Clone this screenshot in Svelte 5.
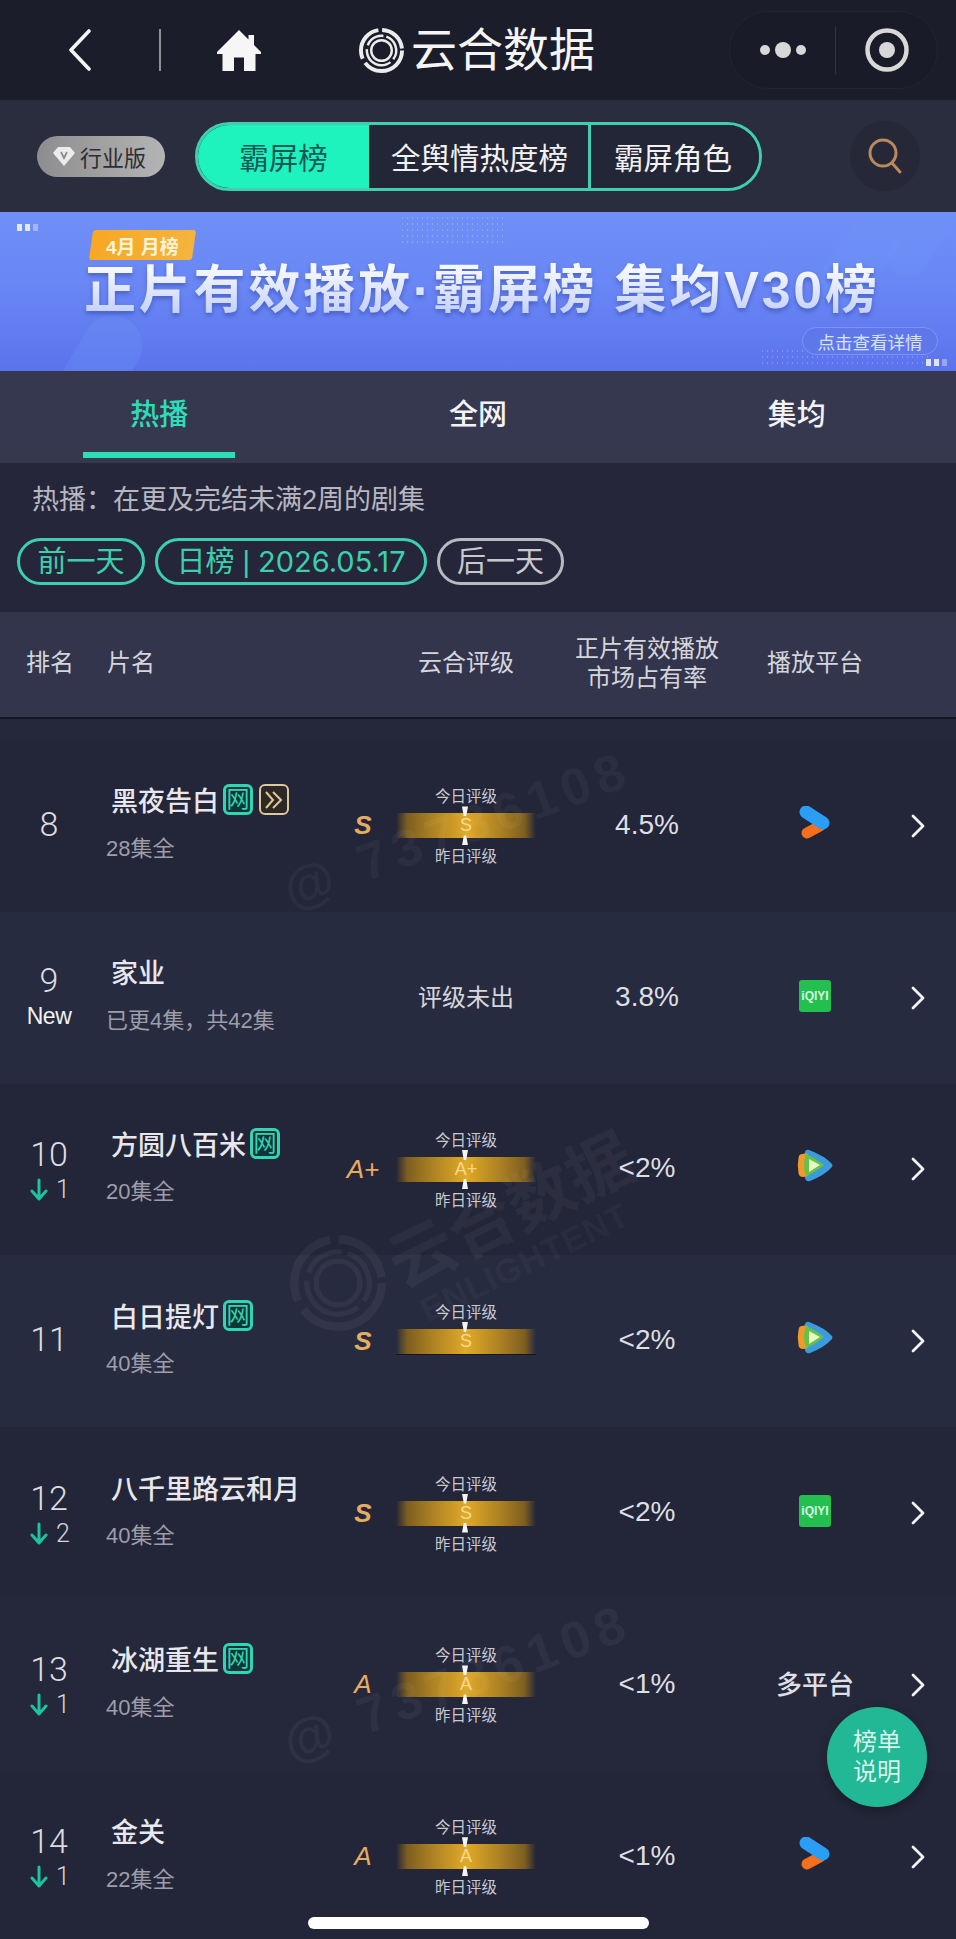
<script>
  const rows = [
    { n: '8', title: '黑夜告白', net: true, fast: true, sub: '28集全', grade: 'S', pct: '4.5%', plat: 'youku' },
    { n: '9', isNew: true, title: '家业', sub: '已更4集，共42集', pct: '3.8%', plat: 'iqiyi' },
    { n: '10', down: '1', title: '方圆八百米', net: true, sub: '20集全', grade: 'A+', pct: '<2%', plat: 'tencent' },
    { n: '11', title: '白日提灯', net: true, sub: '40集全', grade: 'S', noPrev: true, pct: '<2%', plat: 'tencent' },
    { n: '12', down: '2', title: '八千里路云和月', sub: '40集全', grade: 'S', pct: '<2%', plat: 'iqiyi' },
    { n: '13', down: '1', title: '冰湖重生', net: true, sub: '40集全', grade: 'A', pct: '<1%', plat: 'multi' },
    { n: '14', down: '1', title: '金关', sub: '22集全', grade: 'A', pct: '<1%', plat: 'youku' }
  ];
</script>

{#snippet ringLogo(size, color)}
  <svg width={size} height={size} viewBox="0 0 48 48" fill="none" stroke={color}>
    <circle cx="24" cy="24" r="21" stroke-width="4" stroke-dasharray="52 5 38 4 30 3"/>
    <circle cx="24" cy="24" r="15" stroke-width="2.5" stroke-dasharray="30 4 20 3 28 4" transform="rotate(70 24 24)"/>
    <circle cx="24" cy="24" r="10.5" stroke-width="2.5"/>
  </svg>
{/snippet}

<div class="page">
  <header class="nav">
    <svg class="back" width="24" height="42" viewBox="0 0 24 42" fill="none" stroke="#f4f4f4" stroke-width="3.6" stroke-linecap="round" stroke-linejoin="round"><path d="M21 2 L3 21 L21 40"/></svg>
    <span class="nav-div"></span>
    <svg class="home" width="44" height="41" viewBox="0 0 44 41" fill="#f6f6f6"><path d="M22 0 L31.5 9.5 V5 H37 V15 L44 22 V24 H38.5 V41 H27 V27.5 H17 V41 H5.5 V24 H0 V22 Z"/></svg>
    <div class="brand">
      {@render ringLogo(47, '#ececec')}
      <span>云合数据</span>
    </div>
    <div class="capsule">
      <div class="dots"><i></i><b></b><i></i></div>
      <span class="cap-div"></span>
      <svg width="44" height="44" viewBox="0 0 44 44" fill="none"><circle cx="22" cy="22" r="19.5" stroke="#d8d8d8" stroke-width="4.5"/><circle cx="22" cy="22" r="8" fill="#d8d8d8"/></svg>
    </div>
  </header>

  <section class="filters">
    <div class="vip">
      <svg width="22" height="22" viewBox="0 0 22 22"><path d="M5 2 H17 L22 8 L11 21 L0 8 Z" fill="#ececec"/><path d="M8 7 L11 13 L14 7" fill="none" stroke="#8b8b8b" stroke-width="1.8"/></svg>
      <span>行业版</span>
    </div>
    <div class="seg">
      <span class="seg-on">霸屏榜</span>
      <span class="seg-mid">全舆情热度榜</span>
      <span class="seg-end">霸屏角色</span>
    </div>
    <div class="search">
      <svg width="36" height="38" viewBox="0 0 36 38" fill="none" stroke="#b98a5e" stroke-width="3" stroke-linecap="round"><circle cx="16" cy="16" r="13"/><path d="M25 26 L33 35"/></svg>
    </div>
  </section>

  <section class="banner">
    <span class="blob b1"></span><span class="blob b2"></span><span class="blob b3"></span>
    <span class="grid-dots gd1"></span><span class="grid-dots gd2"></span>
    <span class="sq sq1"><i></i><i></i><i></i></span>
    <span class="sq sq2"><i></i><i></i><i></i></span>
    <div class="tag"><span>4月 月榜</span></div>
    <h1>正片有效播放·霸屏榜 集均V30榜</h1>
    <div class="more">点击查看详情</div>
  </section>

  <nav class="tabs">
    <div class="tab active">热播<i></i></div>
    <div class="tab">全网</div>
    <div class="tab">集均</div>
  </nav>

  <section class="info">
    <p>热播：在更及完结未满2周的剧集</p>
    <div class="pills">
      <span class="pill p1">前一天</span>
      <span class="pill p2">日榜 | <em>2026.05.17</em></span>
      <span class="pill p3">后一天</span>
    </div>
  </section>

  <div class="thead">
    <span class="th-rank">排名</span>
    <span class="th-name">片名</span>
    <span class="th-rate">云合评级</span>
    <span class="th-pct">正片有效播放<br>市场占有率</span>
    <span class="th-plat">播放平台</span>
  </div>

  <div class="list">
    {#each rows as r, i}
      <div class="row" class:alt={i % 2 === 1}>
        <div class="rank" class:solo={!r.down && !r.isNew} class:dropped={r.down}>
          <span class="num">{r.n}</span>
          {#if r.isNew}<span class="new">New</span>{/if}
          {#if r.down}
            <span class="delta">
              <svg width="18" height="24" viewBox="0 0 18 24" fill="none" stroke="#1cc39c" stroke-width="3" stroke-linecap="round" stroke-linejoin="round"><path d="M9 2 V21 M2 13 L9 21 L16 13"/></svg>
              {r.down}
            </span>
          {/if}
        </div>
        <div class="name">
          <div class="title">
            <span>{r.title}</span>
            {#if r.net}<span class="badge net">网</span>{/if}
            {#if r.fast}
              <span class="badge fast"><svg width="20" height="20" viewBox="0 0 20 20" fill="none" stroke="#e3c896" stroke-width="2"><path d="M2 2 L9 10 L2 18 M9 2 L17 10 L9 18"/></svg></span>
            {/if}
          </div>
          <div class="sub">{r.sub}</div>
        </div>
        {#if r.grade}
          <div class="letter" class:bold={r.grade === 'S'}>{r.grade}</div>
          <div class="rating">
            <span class="lab">今日评级</span>
            <div class="bar" class:nobot={r.noPrev}>
              <i class="tri up"></i>
              <span>{r.grade}</span>
              {#if !r.noPrev}<i class="tri dn"></i>{/if}
            </div>
            <span class="lab" class:hide={r.noPrev}>昨日评级</span>
          </div>
        {:else}
          <div class="unrated">评级未出</div>
        {/if}
        <div class="pct">{r.pct}</div>
        <div class="plat">
          {#if r.plat === 'youku'}
            <svg width="32" height="36" viewBox="0 0 32 36" fill="none" stroke-linecap="round" stroke-linejoin="round">
              <path d="M8 27 L21 20" stroke="#f4701c" stroke-width="11"/>
              <path d="M7 6 L24 17" stroke="#2a9df4" stroke-width="13"/>
            </svg>
          {:else if r.plat === 'iqiyi'}
            <span class="iq">iQIYI</span>
          {:else if r.plat === 'tencent'}
            <svg class="tx" width="36" height="33" viewBox="0 0 36 33">
              <path d="M12 1 Q9 0 8 3 Q4 16 8 29 Q9 33 13 32 Q28 26 35 18 Q36 16 35 15 Q28 7 12 1 Z" fill="#3c9bdc"/>
              <path d="M5 5 Q2 5 1.500 9 Q0 16 1.500 24 Q2 28 6 28 Q9 28 12 26 Q8 16 11 5 Q8 4 5 5 Z" fill="#ef9a2a"/>
              <path d="M9 5 Q17 8 27 16 Q17 24 9 27 Q5 16 9 5 Z" fill="#64c24a"/>
              <path d="M12 10 L23 16 L12 23 Z" fill="#e9f8c0"/>
            </svg>
          {:else}
            <span class="multi">多平台</span>
          {/if}
        </div>
        <div class="go">
          <svg width="16" height="24" viewBox="0 0 16 24" fill="none" stroke="#f2f2f2" stroke-width="2.8" stroke-linecap="round" stroke-linejoin="round"><path d="M3 2 L13 12 L3 22"/></svg>
        </div>
      </div>
    {/each}
  </div>

  <div class="mark m1">@ 73786108</div>
  <div class="mark m2">@ 73786108</div>
  <div class="wm-logo">{@render ringLogo(100, 'rgba(255,255,255,.05)')}</div>
  <div class="wm-text">云合数据<small>ENLIGHTENT</small></div>

  <div class="fab">榜单<br>说明</div>
  <div class="home-bar"></div>
</div>

<style>
  :global(body) { margin: 0; background: #23253a; }
  .page {
    position: relative; width: 956px; height: 1939px; overflow: hidden;
    background: #25273a; color: #e6e6ea;
    font-family: "Liberation Sans", "Noto Sans CJK SC", sans-serif;
  }

  /* nav */
  .nav { height: 100px; background: #1c1d2b; display: flex; align-items: center; box-sizing: border-box; padding-left: 68px; position: relative; }
  .back { flex: none; }
  .nav-div { width: 2px; height: 42px; background: #8e8f97; margin-left: 67px; }
  .home { margin-left: 56px; flex: none; }
  .brand { margin-left: 97px; display: flex; align-items: center; gap: 6px; font-size: 46px; color: #f5f5f5; line-height: 1; }
  .capsule {
    margin-left: auto; margin-right: 18px; width: 209px; height: 78px; border-radius: 39px; box-sizing: border-box;
    background: #1a1b28; border: 1px solid #232433; display: flex; align-items: center; padding-left: 30px;
  }
  .dots { display: flex; align-items: center; gap: 5px; width: 48px; }
  .dots i { width: 10px; height: 10px; border-radius: 50%; background: #d8d8d8; }
  .dots b { width: 16px; height: 16px; border-radius: 50%; background: #d8d8d8; }
  .cap-div { width: 1px; height: 48px; background: #33343f; margin-left: 27px; margin-right: 29px; }

  /* filters */
  .filters { height: 112px; background: #2a2d3e; display: flex; align-items: center; padding-left: 37px; box-sizing: border-box; }
  .vip { width: 128px; height: 41px; border-radius: 21px; background: linear-gradient(90deg, #8d8d8f, #b4b4b4); display: flex; align-items: center; gap: 5px; padding-left: 16px; box-sizing: border-box; color: #2d2d33; font-size: 22px; }
  .seg { margin-left: 30px; width: 567px; height: 69px; box-sizing: border-box; border: 3px solid #3fcfae; border-radius: 35px; display: flex; font-size: 29.500px; color: #f2f2f2; overflow: hidden; }
  .seg span { display: flex; align-items: center; justify-content: center; box-sizing: border-box; white-space: nowrap; }
  .seg-on { width: 171px; background: #1ff3bd; color: #0f5a57; }
  .seg-mid { width: 222px; border-left: 2px solid #1d2030; background: #232636; border-right: 3px solid #3fcfae; }
  .seg-end { flex: 1; background: #232636; padding-right: 4px; }
  .search { margin-left: 88px; width: 70px; height: 70px; border-radius: 50%; background: #262838; display: flex; align-items: center; justify-content: center; }

  /* banner */
  .banner { position: relative; height: 159px; overflow: hidden; background: linear-gradient(180deg, #6f8ff6 0%, #6a87f5 45%, #5b73ed 100%); }
  .blob { position: absolute; border-radius: 40px; background: rgba(110,150,245,.3); }
  .b1 { left: 840px; top: -20px; width: 50px; height: 120px; transform: rotate(35deg); }
  .b2 { left: 905px; top: -30px; width: 40px; height: 100px; transform: rotate(35deg); }
  .b3 { left: 70px; top: 100px; width: 60px; height: 110px; transform: rotate(30deg); }
  .grid-dots { position: absolute; background-image: radial-gradient(rgba(255,255,255,.2) .8px, transparent 1px); background-size: 5px 6px; }
  .gd1 { left: 400px; top: 3px; width: 105px; height: 28px; }
  .gd2 { left: 760px; top: 136px; width: 170px; height: 20px; }
  .sq { position: absolute; display: flex; gap: 3px; }
  .sq i { width: 5px; height: 7px; background: rgba(255,255,255,.8); }
  .sq i:last-child { opacity: .45; }
  .sq1 { left: 17px; top: 12px; }
  .sq2 { left: 926px; top: 147px; }
  .tag { position: absolute; left: 91px; top: 18px; width: 103px; height: 30px; background: linear-gradient(90deg, #f7a823, #f4b43e); border-radius: 3px; transform: skewX(-8deg); display: flex; align-items: center; justify-content: center; }
  .tag span { font-size: 19px; font-weight: 700; color: #fff3d8; transform: skewX(8deg); }
  .banner h1 {
    position: absolute; left: 84px; top: 44px; margin: 0; font-size: 52px; line-height: 68px; font-weight: 700; letter-spacing: 2.800px; white-space: nowrap;
    background: linear-gradient(180deg, #f6f8ff 20%, #c3d0fb 85%); -webkit-background-clip: text; background-clip: text; color: transparent;
    filter: drop-shadow(0 3px 2px rgba(50,70,170,.55));
  }
  .more { position: absolute; left: 802px; top: 115px; width: 136px; height: 28px; border-radius: 14px; border: 1px solid #7d93f5; box-sizing: border-box; background: #5e78ea; color: #d9e2ff; font-size: 17.500px; display: flex; align-items: center; justify-content: center; }

  /* tabs */
  .tabs { height: 92px; background: #36384f; display: grid; grid-template-columns: repeat(3, 1fr); }
  .tab { position: relative; text-align: center; font-size: 29px; font-weight: 500; line-height: 88px; color: #f3f3f3; }
  .tab.active { color: #2fdcb9; }
  .tab i { position: absolute; left: 83px; width: 152px; bottom: 5px; height: 6px; background: #2fdcb9; }

  /* info */
  .info { height: 149px; background: #25263a; box-sizing: border-box; padding: 17px 0 0 32px; }
  .info p { margin: 0; font-size: 27px; line-height: 40px; color: #b6b7c0; }
  .pills { display: flex; gap: 10px; margin: 18px 0 0 -15px; }
  .pill { height: 47px; box-sizing: border-box; border: 3px solid #3bd0ad; border-radius: 24px; font-size: 29px; line-height: 40px; color: #3bd0ad; display: flex; align-items: center; justify-content: center; white-space: pre; }
  .pill em { font-style: normal; font-family: Inter, "Liberation Sans", sans-serif; font-size: 29px; }
  .p1 { width: 128px; }
  .p2 { width: 272px; }
  .p3 { width: 127px; border-color: #b9b9c0; color: #c8c8ce; }

  /* table header */
  .thead {
    height: 107px; box-sizing: border-box; background: #33354d; border-bottom: 2px solid #14151f; padding-bottom: 4px;
    display: grid; grid-template-columns: 98px 228px 70px 140px 222px 114px 84px; align-items: center;
    font-size: 24px; line-height: 29px; color: #d5d5dc;
  }
  .thead span { white-space: nowrap; text-align: center; }
  .th-rank { grid-column: 1; margin-left: 2px; }
  .th-name { grid-column: 2; text-align: left !important; padding-left: 9px; }
  .th-rate { grid-column: 4; }
  .th-pct { grid-column: 5; }
  .th-plat { grid-column: 6; }

  /* rows */
  .list { padding-top: 21px; }
  .row {
    height: 171.800px; background: #232538;
    display: grid; grid-template-columns: 98px 228px 70px 140px 222px 114px 84px; align-items: center;
  }
  .row.alt { background: #272b3f; }
  .row:nth-child(6) { background: #25283b; }
  .rank { display: flex; flex-direction: column; align-items: center; color: #dcdce0; }
  .rank.solo { padding-bottom: 4px; }
  .rank.dropped { padding-top: 5px; }
  .num { font-family: Roboto, sans-serif; font-weight: 300; font-size: 34px; line-height: 36px; }
  .new { font-size: 23px; line-height: 36px; color: #f2f2f2; font-weight: 500; letter-spacing: -.5px; }
  .delta { display: flex; align-items: center; gap: 8px; font-family: Roboto, sans-serif; font-weight: 300; font-size: 25px; line-height: 36px; color: #d5d5d8; padding-left: 2px; }
  .name { padding-bottom: 6px; }
  .title { display: flex; align-items: center; gap: 4px; padding-left: 13px; height: 36px; font-size: 27px; font-weight: 500; color: #e8e8ec; white-space: nowrap; }
  .sub { margin: 16px 0 0 8px; font-size: 22px; line-height: 30px; color: #9d9ea8; white-space: nowrap; }
  .badge { flex: none; width: 30px; height: 31px; box-sizing: border-box; border-radius: 6px; display: flex; align-items: center; justify-content: center; }
  .net { border: 3px solid #2fd6b4; background: #113438; color: #2fd6b4; font-size: 23px; font-weight: 400; line-height: 1; }
  .fast { border: 2px solid #dfc79c; background: #2c2826; margin-left: 2px; }
  .letter { text-align: center; font-style: italic; font-size: 26px; color: #e6ac62; padding-left: 4px; }
  .letter.bold { font-weight: 700; }
  .rating { display: flex; flex-direction: column; align-items: center; padding-top: 3px; }
  .lab { font-size: 15.500px; line-height: 20px; color: #c9cad2; }
  .lab.hide { visibility: hidden; }
  .bar {
    position: relative; width: 140px; height: 25px; margin: 6px 0 9px; display: flex; align-items: center; justify-content: center;
    background: linear-gradient(90deg, transparent 0%, #7d5e20 8%, #ab8023 25%, #e0a928 50%, #ab8023 75%, #7d5e20 92%, transparent 100%);
    font-size: 18px; color: #f8d98f;
  }
  .bar.nobot { box-shadow: 0 1px 0 #14151f; }
  .tri { position: absolute; left: 66px; width: 6px; height: 10px; background: #f4f4f4; }
  .tri.up { top: -7px; clip-path: polygon(0 0, 100% 0, 70% 100%, 30% 100%); }
  .tri.dn { bottom: -7px; clip-path: polygon(30% 0, 70% 0, 100% 100%, 0 100%); }
  .unrated { grid-column: 3 / span 2; text-align: center; padding: 0 0 4px 70px; font-size: 24px; font-weight: 400; color: #d6d6dc; }
  .pct { text-align: center; font-size: 28px; color: #dedfe4; padding-bottom: 2px; }
  .plat { display: flex; justify-content: center; align-items: center; padding-bottom: 4px; }
  .tx { margin-bottom: 4px; }
  .iq { width: 32px; height: 32px; border-radius: 3px; background: #23c04f; color: #dcf7e2; font-size: 12px; font-weight: 700; display: flex; align-items: center; justify-content: center; }
  .multi { font-size: 26px; font-weight: 500; color: #dedfe4; white-space: nowrap; }
  .go { padding-left: 38px; display: flex; }

  /* watermarks */
  .mark, .wm-logo, .wm-text { position: absolute; pointer-events: none; }
  .mark { font-size: 52px; font-weight: 700; letter-spacing: 7px; color: rgba(255,255,255,.045); white-space: nowrap; transform: rotate(-20deg); transform-origin: left center; }
  .m1 { left: 285px; top: 862px; }
  .m2 { left: 285px; top: 1715px; }
  .wm-logo { left: 288px; top: 1233px; }
  .wm-text { left: 400px; top: 1232px; font-size: 66px; font-weight: 700; line-height: 70px; color: rgba(255,255,255,.045); transform: rotate(-26deg); transform-origin: left center; white-space: nowrap; }
  .wm-text small { display: block; font-size: 34px; line-height: 34px; letter-spacing: 1px; margin-left: 8px; }

  .fab { position: absolute; left: 827px; top: 1707px; width: 100px; height: 100px; border-radius: 50%; background: #22b795; color: #d9f2ea; font-size: 24px; line-height: 30px; display: flex; align-items: center; justify-content: center; text-align: center; box-shadow: 0 3px 10px rgba(0,0,0,.25); }
  .home-bar { position: absolute; left: 308px; top: 1917px; width: 341px; height: 12px; border-radius: 6px; background: #fff; }
</style>
